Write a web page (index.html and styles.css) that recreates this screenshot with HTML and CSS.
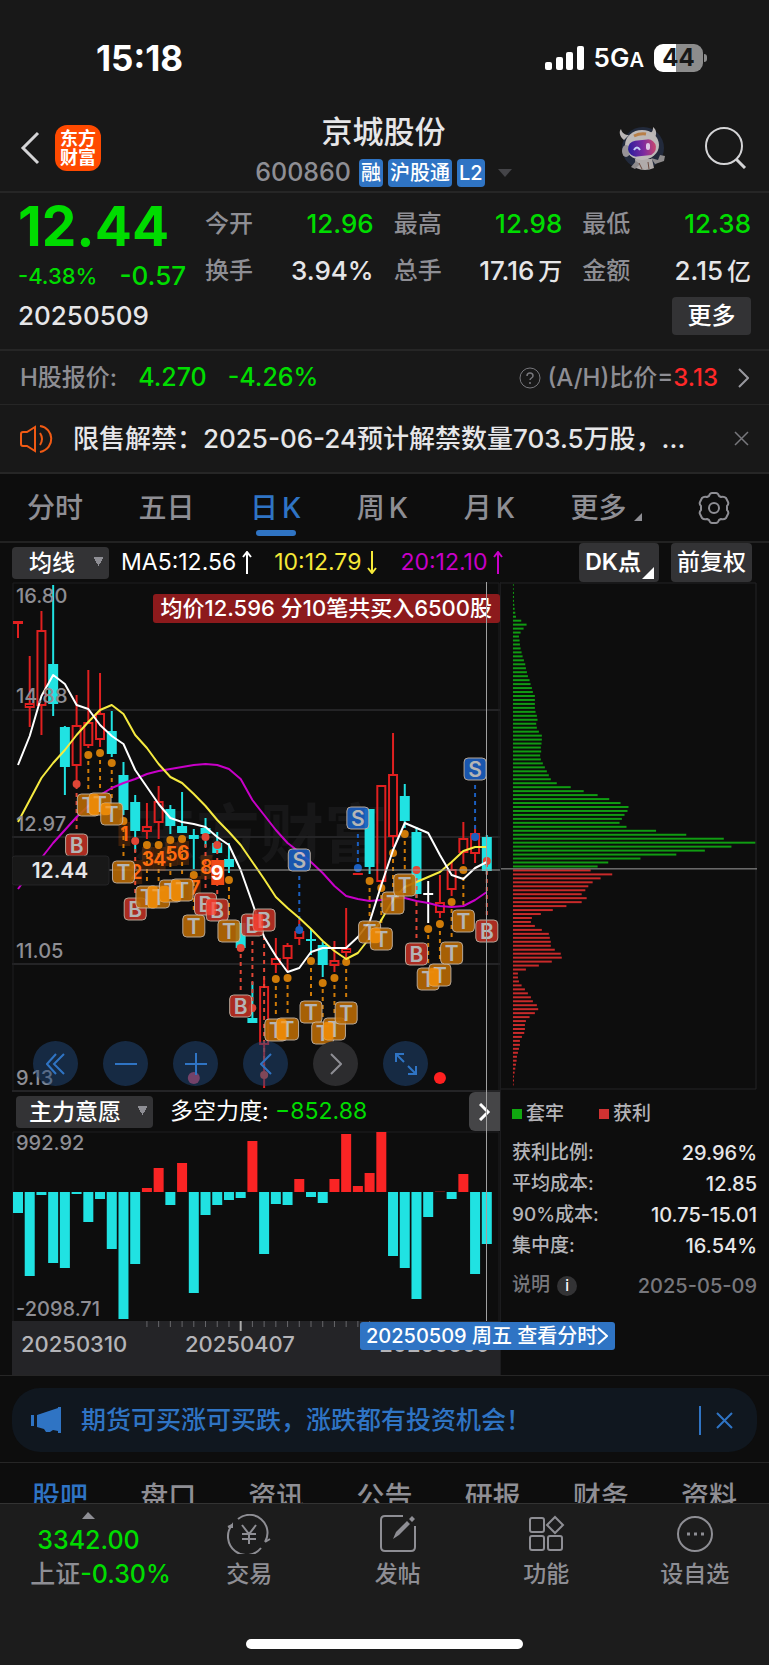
FILE: index.html
```html
<!DOCTYPE html>
<html lang="zh-CN">
<head>
    <meta charset="UTF-8">
    <meta name="viewport" content="width=device-width, initial-scale=1.0">
    <title>京城股份 600860</title>
    <link rel="stylesheet" href="styles.css">
</head>
<body>
    <!-- Status bar -->
    <div class="status-bar">
        <span class="clock">15:18</span>
        <div class="status-right">
            <svg width="39" height="25" viewBox="0 0 39 25" fill="#fff" aria-hidden="true">
                <rect x="0" y="16" width="7" height="8" rx="2"/>
                <rect x="11" y="11" width="7" height="13" rx="2"/>
                <rect x="21" y="6" width="7" height="18" rx="2"/>
                <rect x="32" y="0" width="7" height="24" rx="2"/>
            </svg>
            <span class="network">5G<small>A</small></span>
            <span class="battery">44</span>
        </div>
    </div>

    <header class="header">
        <div class="header-side">
            <button type="button" class="icon-btn" aria-label="返回">
                <svg width="20" height="34" viewBox="0 0 20 34" fill="none" stroke="#d4d4d6" stroke-width="3"><path d="M18 2L3 17l15 15"/></svg>
            </button>
            <a href="#" class="logo">东方<br>财富</a>
        </div>
        <div class="stock-title">
            <h1>京城股份</h1>
            <div class="stock-code">
                <span class="code">600860</span>
                <span class="tag">融</span>
                <span class="tag">沪股通</span>
                <span class="tag">L2</span>
                <svg class="caret" width="14" height="8" viewBox="0 0 14 8" fill="#444448"><path d="M0 0h14L7 8z"/></svg>
            </div>
        </div>
        <div class="header-side header-right">
            <button type="button" class="icon-btn" aria-label="智能助手">
                <svg width="46" height="46" viewBox="0 0 46 46">
                    <defs>
                        <linearGradient id="visor" x1="0" y1="0" x2="1" y2="0">
                            <stop offset="0" stop-color="#2a1f9c"/>
                            <stop offset=".55" stop-color="#7c2ba0"/>
                            <stop offset="1" stop-color="#c8486e"/>
                        </linearGradient>
                    </defs>
                    <circle cx="24" cy="23" r="21" fill="#222a3c"/>
                    <path d="M5 15C0 11 0 6 2 4c1 4 4 6 8 6zM31 8c3-1 3-4 3-6 4 3 4 8 1 12z" fill="#b9b5b5"/>
                    <path d="M16 34h17l2 9q-9 4-18 0z" fill="#b0abaa"/>
                    <path d="M17 36l-5 6 4 2 5-5zM32 33l7 2 2-5 5 1-1 5-9 3z" fill="#8e8b8c"/>
                    <path d="M20 38l3 6M29 37l1 7" stroke="#6b4b40"/>
                    <ellipse cx="23" cy="20" rx="17" ry="15" fill="#bdb9b9"/>
                    <ellipse cx="7" cy="26" rx="4" ry="6" fill="#979397"/>
                    <path d="M15 11q6-3 12-2" stroke="#b87f48" stroke-width="3" fill="none"/>
                    <rect x="9" y="15" width="28" height="16" rx="8" fill="url(#visor)" transform="rotate(-6 23 23)"/>
                    <path d="M15 25q3-5 6 0" stroke="#c2d0f4" stroke-width="2" fill="none"/>
                    <rect x="27" y="18" width="4" height="7" rx="2" fill="#dcc8e6"/>
                </svg>
            </button>
            <button type="button" class="icon-btn" aria-label="搜索">
                <svg width="42" height="42" viewBox="0 0 42 42" fill="none" stroke="#d4d4d6" stroke-width="2"><circle cx="19" cy="19" r="18"/><path d="M31 32l9 9" stroke-width="3"/></svg>
            </button>
        </div>
    </header>

    <!-- Quote -->
    <section class="quote">
        <div class="quote-price">
            <strong class="price">12.44</strong>
            <div class="change"><span>-4.38%</span><span class="change-amount">-0.57</span></div>
        </div>
        <dl class="quote-grid">
            <div><dt>今开</dt><dd class="down">12.96</dd></div>
            <div><dt>最高</dt><dd class="down">12.98</dd></div>
            <div><dt>最低</dt><dd class="down">12.38</dd></div>
            <div><dt>换手</dt><dd>3.94%</dd></div>
            <div><dt>总手</dt><dd>17.16<small>万</small></dd></div>
            <div><dt>金额</dt><dd>2.15<small>亿</small></dd></div>
        </dl>
        <div class="quote-foot">
            <span class="quote-date">20250509</span>
            <button type="button" class="more-btn">更多</button>
        </div>
    </section>

    <a href="#" class="h-share">
        <span>H股报价:</span>
        <span class="h-price">4.270</span>
        <span class="h-change">-4.26%</span>
        <svg class="help" width="22" height="22" viewBox="0 0 22 22" fill="none" stroke="#77777c"><circle cx="11" cy="11" r="10"/><path d="M8 9c0-4 6-4 6 0 0 2-3 2-3 4m0 2v2" stroke-width="1.5"/></svg>
        <span>(A/H)比价=<b>3.13</b></span>
        <svg class="chevron" width="11" height="20" viewBox="0 0 11 20" fill="none" stroke="#98989e" stroke-width="2"><path d="M1 1l9 9-9 9"/></svg>
    </a>

    <div class="notice">
        <svg width="33" height="28" viewBox="0 0 33 28" fill="none" stroke="#f05a14" stroke-width="2"><path d="M15 2L7 7H3q-2 0-2 2v10q0 2 2 2h4l8 5zM20 8q4 6 0 12M20 1c14 2 16 22 0 26"/></svg>
        <p>限售解禁：2025-06-24预计解禁数量703.5万股，...</p>
        <button type="button" class="icon-btn" aria-label="关闭">
            <svg width="15" height="15" viewBox="0 0 15 15" stroke="#77777c" stroke-width="1.5"><path d="M1 1l13 13M14 1L1 14"/></svg>
        </button>
    </div>

    <!-- Period tabs -->
    <nav class="period-tabs">
        <button type="button">分时</button>
        <button type="button">五日</button>
        <button type="button" class="active">日<span>K</span></button>
        <button type="button">周<span>K</span></button>
        <button type="button">月<span>K</span></button>
        <button type="button" class="has-more">更多</button>
        <button type="button" aria-label="设置">
            <svg width="32" height="32" viewBox="0 0 32 32" fill="none" stroke="#8e8e94" stroke-width="2" stroke-linejoin="round"><circle cx="16" cy="16" r="5"/><path d="M11 4q1-3 3-3h4q2 0 3 3l2 1q3-1 5 1l2 4q1 2-1 4v4q2 2 1 4l-2 4q-2 2-5 1l-2 1q-1 3-3 3h-4q-2 0-3-3l-2-1q-3 1-5-1l-2-4q-1-2 1-4v-4q-2-2-1-4l2-4q2-2 5-1z"/></svg>
        </button>
    </nav>

    <div class="ma-bar">
        <select class="select select-ma" aria-label="主图指标"><option>均线</option></select>
        <span class="ma5">MA5:12.56<svg class="arrow" width="10" height="23" viewBox="0 0 10 23" fill="none" stroke="currentColor" stroke-width="2"><path d="M5 23V1M1 6l4-5 4 5"/></svg></span>
        <span class="ma10">10:12.79<svg class="arrow" width="10" height="23" viewBox="0 0 10 23" fill="none" stroke="currentColor" stroke-width="2"><path d="M5 0v22M1 17l4 5 4-5"/></svg></span>
        <span class="ma20">20:12.10<svg class="arrow" width="10" height="23" viewBox="0 0 10 23" fill="none" stroke="currentColor" stroke-width="2"><path d="M5 23V1M1 6l4-5 4 5"/></svg></span>
        <button type="button" class="bar-btn dk">DK点</button>
        <button type="button" class="bar-btn">前复权</button>
    </div>

    <!-- Charts -->
    <main class="charts">
        <div class="chart-left">
            <div class="k-chart">
                <svg id="kline" viewBox="0 0 488 510" role="img" aria-label="日K线"></svg>
                <div class="avg-tip">均价12.596 分10笔共买入6500股</div>
                <div class="chart-tools">
                    <button type="button" aria-label="最早"><svg width="20" height="22" viewBox="0 0 20 22"><path d="M10 1L1 11l9 10M18 1L8 11l10 10"/></svg></button>
                    <button type="button" aria-label="缩小"><svg width="22" height="22" viewBox="0 0 22 22"><path d="M0 11h22"/></svg></button>
                    <button type="button" aria-label="放大"><svg width="22" height="22" viewBox="0 0 22 22"><path d="M0 11h22M11 0v22"/></svg></button>
                    <button type="button" aria-label="前一日"><svg width="12" height="22" viewBox="0 0 12 22"><path d="M11 1L1 11l10 10"/></svg></button>
                    <button type="button" class="off" aria-label="后一日"><svg width="12" height="22" viewBox="0 0 12 22"><path d="M1 1l10 10L1 21"/></svg></button>
                    <button type="button" aria-label="全屏"><svg width="22" height="22" viewBox="0 0 22 22"><path d="M1 9V1h8M1 1l8 8M21 13v8h-8M21 21l-8-8"/></svg></button>
                </div>
            </div>

            <div class="sub-bar">
                <select class="select select-sub" aria-label="副图指标"><option>主力意愿</option></select>
                <span>多空力度: <span class="down">−852.88</span></span>
                <button type="button" class="next-btn" aria-label="更多指标"><svg width="12" height="18" viewBox="0 0 12 18" fill="none" stroke="#fff" stroke-width="3"><path d="M1 1l8 8-8 8"/></svg></button>
            </div>

            <svg id="power" viewBox="0 0 488 190" role="img" aria-label="多空力度"></svg>

            <svg id="axis" class="axis" viewBox="0 0 488 54" role="img" aria-label="日期"></svg>
            <button type="button" class="date-tip">20250509 周五 查看分时<svg width="11" height="18" viewBox="0 0 11 18" fill="none" stroke="#fff" stroke-width="2"><path d="M1 1l9 8-9 8"/></svg></button>
            <div class="crosshair"></div>
        </div>

        <div class="chart-right">
            <svg id="chips" viewBox="0 0 257 510" role="img" aria-label="筹码分布"></svg>
            <div class="legend"><span class="trapped">套牢</span><span class="profit">获利</span></div>
            <dl class="chip-info">
                <div><dt>获利比例:</dt><dd>29.96%</dd></div>
                <div><dt>平均成本:</dt><dd>12.85</dd></div>
                <div><dt>90%成本:</dt><dd>10.75-15.01</dd></div>
                <div><dt>集中度:</dt><dd>16.54%</dd></div>
            </dl>
            <div class="chip-note"><a href="#">说明 <i>i</i></a><span>2025-05-09</span></div>
        </div>
    </main>

    <div class="promo-wrap">
        <div class="promo">
            <svg width="31" height="26" viewBox="0 0 31 26" fill="#2f74c4"><path d="M0 8h3v11H0zM6 8L27 1V0h3v26h-3v-2l-5-1-3 2-4 0-2-3-7-2z"/></svg>
            <a href="#">期货可买涨可买跌，涨跌都有投资机会！</a>
            <button type="button" class="icon-btn" aria-label="关闭">
                <svg width="17" height="17" viewBox="0 0 17 17" stroke="#2f74c4" stroke-width="2"><path d="M1 1l15 15M16 1L1 16"/></svg>
            </button>
        </div>
    </div>

    <nav class="info-tabs">
        <a href="#" class="active">股吧</a>
        <a href="#">盘口</a>
        <a href="#">资讯</a>
        <a href="#">公告</a>
        <a href="#">研报</a>
        <a href="#">财务</a>
        <a href="#">资料</a>
    </nav>

    <!-- Bottom bar -->
    <footer class="bottom-bar">
        <div class="bottom-items">
            <a href="#" class="index">
                <svg width="13" height="7" viewBox="0 0 13 7" fill="#8e8e94"><path d="M0 7h13L6 0z"/></svg>
                <span class="index-value down">3342.00</span>
                <span>上证<span class="down">-0.30%</span></span>
            </a>
            <a href="#">
                <svg width="44" height="40" viewBox="0 0 44 40"><path d="M11 5A18 18 0 0 1 38 28l1-2m-1 2l5-3M34 34A18 18 0 0 1 5 11v3m0-3L1 13M15 11l7 9 7-9M22 20v10M15 20h14M15 25h14"/></svg>
                交易
            </a>
            <a href="#">
                <svg width="44" height="40" viewBox="0 0 44 40"><path d="M27 2H9Q5 2 5 6v27q0 4 4 4h26q4 0 4-4V12"/><path d="M17 25l3-7L31 7l3 3-11 11zM33 5l3-3 3 3-3 3z" fill="#8e8e94" stroke="none"/></svg>
                发帖
            </a>
            <a href="#">
                <svg width="44" height="40" viewBox="0 0 44 40"><rect x="6" y="4" width="14" height="14" rx="2"/><path d="M31 3l8 8-8 8-8-8z"/><rect x="6" y="22" width="14" height="14" rx="2"/><rect x="24" y="22" width="14" height="14" rx="2"/></svg>
                功能
            </a>
            <a href="#">
                <svg width="44" height="40" viewBox="0 0 44 40"><circle cx="22" cy="20" r="17"/><path d="M14 20h3m4 0h3m4 0h3" stroke-width="3"/></svg>
                设自选
            </a>
        </div>
        <div class="home-indicator"></div>
    </footer>

    <script src="charts.js"></script>
</body>
</html>
```

FILE: styles.css
```css
* {
    box-sizing: border-box;
}

body {
    margin: 0;
    background-color: #0d0d0d;
    color: #e6e6e8;
    font-family: Inter, "Noto Sans CJK SC", sans-serif;
    font-size: 24px;
    font-weight: 500;
    line-height: 1;
}

a {
    color: inherit;
    text-decoration: none;
}

button {
    font: inherit;
    color: inherit;
    border: none;
    background: none;
    padding: 0;
    cursor: pointer;
}

dl, dd, p, h1 {
    margin: 0;
}

svg {
    display: block;
    flex-shrink: 0;
}

.down {
    color: #00dc00;
}

/* Status bar */
.status-bar {
    display: flex;
    justify-content: space-between;
    align-items: center;
    height: 104px;
    padding: 12px 66px 0 96px;
    background-color: #181818;
    color: #fff;
}

.clock {
    font-size: 35px;
    font-weight: 700;
}

.status-right {
    display: flex;
    align-items: center;
    gap: 10px;
}

.network {
    font-size: 26px;
    font-weight: 600;
}

.network small {
    font-size: 20px;
}

.battery {
    position: relative;
    width: 49px;
    height: 28px;
    border-radius: 9px;
    background: linear-gradient(to right, #fff 44%, #8c8c8c 44%);
    color: #181818;
    font-size: 24px;
    font-weight: 700;
    line-height: 28px;
    text-align: center;
}

.battery::after {
    content: "";
    position: absolute;
    right: -4px;
    top: 10px;
    width: 3px;
    height: 8px;
    border-radius: 0 3px 3px 0;
    background-color: #8c8c8c;
}

/* Header */
.header {
    display: grid;
    grid-template-columns: 1fr auto 1fr;
    align-items: center;
    height: 89px;
    padding: 0 22px 0 20px;
    background-color: #181818;
    border-bottom: 2px solid #262626;
}

.header-side {
    display: flex;
    align-items: center;
    gap: 15px;
}

.header-right {
    justify-content: flex-end;
    gap: 40px;
}

.logo {
    width: 46px;
    height: 46px;
    padding-top: 4px;
    border-radius: 12px;
    background-color: #ff4a00;
    color: #fff;
    font-size: 18px;
    font-weight: 700;
    line-height: 19px;
    text-align: center;
}

.stock-title {
    display: flex;
    flex-direction: column;
    align-items: center;
    gap: 9px;
    padding-top: 5px;
}

.stock-title h1 {
    font-size: 31px;
    font-weight: 500;
    line-height: 36px;
}

.stock-code {
    display: flex;
    align-items: center;
    gap: 5px;
}

.code {
    margin-right: 3px;
    color: #8e8e94;
    font-size: 25px;
}

.tag {
    padding: 0 2px;
    border-radius: 4px;
    background-color: #2f74c4;
    color: #fff;
    font-size: 20px;
    line-height: 28px;
}

.caret {
    margin-left: 8px;
}

/* Quote */
.quote {
    display: grid;
    grid-template-columns: 187px 1fr;
    padding: 7px 18px 14px;
    background-color: #181818;
    border-bottom: 2px solid #262626;
}

.quote-price {
    color: #00dc00;
}

.price {
    display: block;
    font-size: 55px;
    font-weight: 700;
    line-height: 52px;
}

.change {
    display: flex;
    align-items: center;
    gap: 22px;
    margin-top: 10px;
    font-size: 22px;
    line-height: 28px;
}

.change-amount {
    font-size: 26px;
}

.quote-grid {
    display: grid;
    grid-template-columns: repeat(3, 1fr);
    column-gap: 20px;
}

.quote-grid div,
.chip-info div {
    display: flex;
    justify-content: space-between;
    align-items: center;
}

.quote-grid div {
    height: 47px;
}

.quote-grid dt {
    color: #8e8e94;
}

.quote-grid dd {
    font-size: 26px;
}

.quote-grid small {
    margin-left: 4px;
    font-size: 24px;
}

.quote-foot {
    grid-column: 1 / -1;
    display: flex;
    justify-content: space-between;
    align-items: center;
    margin-top: 3px;
}

.quote-date {
    font-size: 26px;
}

.more-btn {
    width: 79px;
    height: 38px;
    border-radius: 4px;
    background-color: #333335;
    color: #fff;
}

.h-share {
    display: flex;
    align-items: center;
    height: 54px;
    padding: 0 20px;
    background-color: #181818;
    border-bottom: 1px solid #262626;
    color: #8e8e94;
    font-size: 24px;
}

.h-price {
    margin: 0 21px;
    color: #00dc00;
    font-size: 25px;
}

.h-change {
    color: #00dc00;
    font-size: 25px;
}

.help {
    margin: 0 6px 0 auto;
}

.h-share b {
    color: #ff2828;
    font-weight: 500;
}

.chevron {
    margin-left: 20px;
}

.notice {
    display: flex;
    align-items: center;
    height: 69px;
    padding: 0 20px;
    background-color: #181818;
    border-bottom: 2px solid #262626;
}

.notice p {
    flex: 1;
    margin: 0 20px;
    overflow: hidden;
    white-space: nowrap;
    text-overflow: ellipsis;
    font-size: 26px;
    line-height: 36px;
}

/* Period tabs */
.period-tabs {
    display: flex;
    justify-content: space-between;
    align-items: center;
    height: 69px;
    padding: 0 39px 0 27px;
    border-bottom: 2px solid #222;
    color: #8e8e94;
    font-size: 28px;
}

.period-tabs button {
    position: relative;
    height: 67px;
}

.period-tabs span {
    margin-left: 4px;
}

.period-tabs .active {
    color: #2f74c4;
}

.period-tabs .active::after {
    content: "";
    position: absolute;
    left: 50%;
    bottom: 5px;
    width: 40px;
    height: 6px;
    margin-left: -20px;
    border-radius: 3px;
    background-color: #2f74c4;
}

.period-tabs .has-more {
    padding-right: 16px;
}

.has-more::after,
.dk::after {
    content: "";
    position: absolute;
    right: 0;
    bottom: 20px;
    border-left: 8px solid transparent;
    border-bottom: 8px solid #8e8e94;
}

.ma-bar {
    display: flex;
    align-items: center;
    height: 39px;
    padding: 0 17px 0 12px;
    font-size: 23px;
    font-weight: 400;
    white-space: nowrap;
}

.select {
    appearance: none;
    height: 32px;
    border: none;
    border-radius: 4px;
    background-color: #333335;
    background-image: conic-gradient(from -30deg at 50% 100%, #8e8e94 60deg, transparent 0);
    background-repeat: no-repeat;
    background-size: 9px 9px;
    background-position: right 6px top 10px;
    color: #fff;
    font: inherit;
    font-weight: 500;
    line-height: 32px;
}

.select-ma {
    width: 97px;
    padding: 0 17px;
}

.ma-bar span {
    display: flex;
    align-items: center;
    gap: 6px;
}

.ma5 {
    margin: 0 22px 0 12px;
    color: #fff;
}

.ma10 {
    margin-right: 23px;
    color: #f5e838;
}

.ma20 {
    color: #c800c8;
}

.bar-btn {
    position: relative;
    height: 39px;
    padding: 0 6px;
    margin-left: 12px;
    border-radius: 4px;
    background-color: #333335;
    color: #fff;
    font-size: 23px;
    font-weight: 500;
}

.dk {
    margin-left: auto;
    padding-right: 18px;
    font-weight: 600;
}

.dk::after {
    right: 5px;
    bottom: 3px;
    border-left-width: 12px;
    border-bottom: 12px solid #fff;
}

/* Charts */
.charts {
    display: grid;
    grid-template-columns: 488fr 257fr;
    margin: 0 12px;
}

.charts svg text {
    font-family: Inter, "Noto Sans CJK SC", sans-serif;
}

.chart-left {
    position: relative;
}

#kline,
#power,
#chips,
#axis {
    width: 100%;
    height: auto;
}

.k-chart {
    position: relative;
}

.avg-tip {
    position: absolute;
    top: 12px;
    right: 0;
    padding: 0 8px;
    border-radius: 3px;
    background-color: #8c1a1c;
    color: #fff;
    font-size: 22px;
    line-height: 29px;
    white-space: nowrap;
}

.chart-tools {
    position: absolute;
    left: 21px;
    bottom: 6px;
    display: flex;
    gap: 25px;
}

.chart-tools button {
    display: flex;
    justify-content: center;
    align-items: center;
    width: 45px;
    height: 45px;
    border-radius: 50%;
    background-color: rgba(32, 72, 122, 0.5);
}

.chart-tools .off {
    background-color: #2c2c2e;
}

.chart-tools svg {
    fill: none;
    stroke: #2f74c4;
    stroke-width: 2;
}

.chart-tools .off svg {
    stroke: #8e8e94;
}

.sub-bar {
    display: flex;
    align-items: center;
    height: 39px;
    padding-left: 4px;
    color: #fff;
    font-size: 23px;
    font-weight: 400;
    white-space: nowrap;
}

.select-sub {
    width: 137px;
    margin-right: 17px;
    padding: 0 13px;
}

.next-btn {
    display: flex;
    justify-content: center;
    align-items: center;
    width: 31px;
    height: 39px;
    margin-left: auto;
    border-radius: 6px 0 0 6px;
    background-color: #454547;
}

.axis {
    background-color: #242427;
}

.date-tip {
    position: absolute;
    left: 348px;
    bottom: 25px;
    display: flex;
    align-items: center;
    height: 28px;
    padding: 0 7px 0 6px;
    border-radius: 3px;
    background-color: #2f74c4;
    color: #fff;
    font-size: 20px;
    white-space: nowrap;
    z-index: 2;
}

.crosshair {
    position: absolute;
    top: 0;
    right: 13px;
    bottom: 54px;
    width: 1px;
    background-color: #a0a0a0;
}

.chart-right {
    border-left: 1px solid #1c1c1e;
    color: #b4b4b8;
    font-size: 19px;
}

.legend {
    display: flex;
    gap: 35px;
    padding: 14px 0 0 11px;
    line-height: 20px;
}

.legend span {
    display: flex;
    align-items: center;
    gap: 4px;
}

.legend span::before {
    content: "";
    width: 10px;
    height: 10px;
    background-color: #10a810;
}

.legend .profit::before {
    background-color: #d03232;
}

.chip-info {
    padding: 13px 0 0 11px;
}

.chip-info div {
    height: 31px;
}

.chip-info dd {
    color: #e6e6e8;
    font-size: 20px;
}

.chip-note {
    display: flex;
    justify-content: space-between;
    align-items: center;
    padding: 14px 0 0 11px;
    color: #77777c;
}

.chip-note span {
    font-size: 20px;
}

.chip-note i {
    display: inline-block;
    width: 20px;
    margin-left: 2px;
    border-radius: 50%;
    background-color: #333335;
    color: #fff;
    font-size: 15px;
    font-style: normal;
    line-height: 20px;
    text-align: center;
}

/* Promo banner */
.promo-wrap {
    padding: 12px 12px 10px;
    border-top: 1px solid #262626;
    border-bottom: 1px solid #262626;
}

.promo {
    display: flex;
    align-items: center;
    height: 64px;
    padding: 0 24px 0 19px;
    border-radius: 28px;
    background-color: #10171f;
    color: #2f74c4;
    font-size: 25px;
}

.promo a {
    flex: 1;
    margin-left: 19px;
}

.promo .icon-btn {
    padding: 6px 0 6px 15px;
    border-left: 2px solid #2f74c4;
}

.info-tabs {
    display: flex;
    justify-content: space-between;
    height: 40px;
    padding: 20px 32px 0;
    overflow: hidden;
    color: #8e8e94;
    font-size: 28px;
}

.info-tabs .active {
    color: #2f74c4;
}

/* Bottom bar */
.bottom-bar {
    height: 162px;
    background-color: #1c1c1c;
    border-top: 1px solid #333;
    color: #8e8e94;
    overflow: hidden;
}

.bottom-items {
    display: grid;
    grid-template-columns: 175px repeat(4, 1fr);
    height: 135px;
}

.bottom-items a {
    display: flex;
    flex-direction: column;
    align-items: center;
    gap: 9px;
    padding-top: 10px;
    font-size: 23px;
}

.bottom-items a > svg {
    fill: none;
    stroke: #8e8e94;
    stroke-width: 2;
}

.bottom-items .index {
    gap: 9px;
    padding: 8px 0 0 26px;
    font-size: 25px;
}

.bottom-items .index > svg {
    margin-right: 24px;
    fill: #8e8e94;
    stroke: none;
}

.index-value {
    margin-right: 24px;
}

.home-indicator {
    width: 36%;
    height: 10px;
    margin: 0 auto;
    border-radius: 5px;
    background-color: #fff;
}
```

FILE: charts.js
```js
const RED = '#e02020';
const CYAN = '#20e2e2';
const STEP = 11.72;
const cx = i => 6 + i * STEP;

// [colour, high, body top, body bottom, low]
const candles = [
    ['f', 39, 39, 42, 56], ['r', 74, 121, 126, 145], ['r', 29, 48, 124, 153], ['c', 3, 82, 122, 134],
    ['c', 144, 145, 185, 213], ['r', 113, 143, 184, 201], ['r', 88, 140, 164, 166], ['r', 91, 131, 158, 165],
    ['c', 129, 149, 172, 175], ['c', 180, 193, 228, 233], ['c', 213, 220, 249, 270], ['r', 221, 244, 250, 257],
    ['r', 204, 219, 241, 257], ['c', 223, 227, 244, 252], ['c', 210, 244, 251, 251], ['c', 247, 253, 257, 287],
    ['c', 236, 246, 252, 265], ['c', 250, 261, 271, 271], ['c', 261, 277, 285, 291], ['c', 341, 341, 366, 366],
    ['c', 400, 436, 441, 441], ['r', 396, 404, 463, 506], ['r', 356, 376, 383, 391], ['r', 361, 363, 377, 390],
    ['r', 338, 349, 357, 363], ['c', 347, 357, 359, 373], ['c', 360, 363, 383, 395], ['r', 359, 378, 384, 390],
    ['r', 326, 366, 371, 377], ['f', 291, 291, 293, 293], ['c', 227, 227, 285, 292], ['r', 203, 203, 300, 303],
    ['r', 151, 192, 255, 265], ['c', 202, 214, 239, 246], ['c', 245, 250, 312, 316], ['w', 299, 311, 313, 341],
    ['r', 293, 320, 331, 336], ['r', 280, 287, 308, 314], ['r', 240, 256, 271, 282], ['r', 244, 251, 272, 281],
    ['c', 253, 255, 289, 292]
];

const ma5 = [183, 154, 114, 93, 102, 123, 127, 143, 154, 162, 188, 205, 222, 236, 240, 242, 245, 255, 263, 288, 321, 355, 374, 390, 386, 370, 366, 366, 366, 355, 340, 303, 268, 241, 246, 251, 273, 293, 297, 286, 280];
const ma10 = [240, 218, 196, 181, 168, 153, 140, 128, 123, 132, 153, 166, 182, 195, 201, 212, 224, 238, 250, 263, 280, 297, 315, 326, 336, 347, 359, 369, 377, 371, 356, 338, 318, 305, 300, 295, 290, 280, 269, 265, 265];
const ma20 = [307, 291, 276, 261, 248, 235, 224, 213, 206, 201, 197, 192, 189, 187, 185, 183, 182, 183, 187, 197, 218, 233, 248, 261, 270, 280, 291, 304, 314, 317, 319, 318, 316, 316, 319, 321, 324, 325, 324, 318, 310];

// [letter, index, badge y, dot y]
const marks = [
    ['B', 5, 263, 202], ['T', 6, 223, 173], ['T', 7, 222, 171], ['T', 8, 232, 181], ['T', 9, 290, 239],
    ['B', 10, 327, 259], ['T', 11, 315, 263], ['T', 12, 315, 263], ['T', 13, 309, 258], ['T', 14, 308, 257],
    ['T', 15, 344, 293], ['B', 16, 322, 255], ['B', 17, 328, 263], ['T', 18, 349, 298], ['B', 19, 424, 366],
    ['B', 20, 343, 426], ['B', 21, 338, 493], ['T', 22, 448, 397], ['T', 23, 447, 396], ['S', 24, 278, 348],
    ['T', 25, 430, 379], ['T', 26, 451, 401], ['T', 27, 447, 396], ['T', 28, 431, 380], ['S', 29, 236, 286],
    ['T', 30, 350, 299], ['T', 31, 357, 306], ['T', 32, 321, 271], ['T', 33, 303, 252], ['B', 34, 372, 288],
    ['T', 35, 397, 347], ['T', 36, 393, 342], ['T', 37, 371, 320], ['T', 38, 339, 288], ['S', 39, 187, 255],
    ['B', 40, 349, 279]
];
// badge fill, overlap fill, dot and stem
const markColors = {
    T: ['#b86a05', '#ff9608', '#cf7b08'],
    B: ['#bd3024', '#ff4030', '#e04636'],
    S: ['#1b5fc0', '#1b5fc0', '#1b5fc0']
};

// [digit, index, y]
const counts = [[1, 9, 252], [2, 10, 290], [3, 11, 277], [4, 12, 277], [5, 13, 272], [6, 14, 271], [7, 15, 306], [8, 16, 285]];

const line = (x1, y1, x2, y2, stroke, extra = '') =>
    `<line x1="${x1}" y1="${y1}" x2="${x2}" y2="${y2}" stroke="${stroke}" ${extra}/>`;
const rect = (x, y, w, h, fill, extra = '') =>
    `<rect x="${x}" y="${y}" width="${w}" height="${h}" fill="${fill}" ${extra}/>`;
const text = (x, y, s, size, fill, extra = '') =>
    `<text x="${x}" y="${y}" font-size="${size}" fill="${fill}" ${extra}>${s}</text>`;
const curve = (values, stroke) =>
    `<polyline points="${values.map((v, i) => `${cx(i)},${v}`).join(' ')}" fill="none" stroke="${stroke}" stroke-width="2" stroke-linejoin="round"/>`;

function drawKline() {
    let s = text(120, 275, '东方财富', 64, '#171718', 'font-weight="700"');
    [128, 255, 382].forEach(y => { s += line(0, y, 488, y, '#242426', 'stroke-width="2"'); });
    s += '<path d="M1 510V1H487V510" fill="none" stroke="#1f1f21"/>' + line(0, 509, 488, 509, '#242426', 'stroke-width="2"');

    candles.forEach(([type, high, top, bottom, low], i) => {
        const x = cx(i);
        const color = type === 'c' ? CYAN : type === 'w' ? '#fff' : RED;
        if (type === 'r') {
            s += line(x, high, x, top, color, 'stroke-width="2"') + line(x, bottom, x, low, color, 'stroke-width="2"');
            s += rect(x - 4, top + 1, 8, Math.max(bottom - top - 2, 2), 'none', `stroke="${color}" stroke-width="2"`);
        } else {
            s += line(x, high, x, low, color, 'stroke-width="2"') + rect(x - 5, top, 10, bottom - top, color);
        }
    });

    marks.forEach(([letter, i, y, dot]) => {
        const color = markColors[letter][2];
        const x = cx(i);
        const end = y > dot ? y - 16 : y + 16;
        s += line(x, end, x, dot, color, 'stroke-width="2" stroke-dasharray="4 4"');
        s += `<circle cx="${x}" cy="${dot}" r="4" fill="${color}"/>`;
    });
    s += curve(ma20, '#c800c8') + curve(ma10, '#f5ea40') + curve(ma5, '#fff');
    s += line(0, 288, 488, 288, '#a0a0a0');

    counts.forEach(([n, i, y]) => {
        s += rect(cx(i) - 5, y - 12, 12, 24, '#ff6a0030');
        s += text(cx(i) + 1, y + 7, n, 20, '#ff6a10', 'text-anchor="middle" font-weight="600"');
    });
    s += rect(cx(17) - 6, 278, 13, 25, '#f04a18') + text(cx(17), 298, 9, 20, '#fff', 'text-anchor="middle" font-weight="700"');

    marks.forEach(([letter, i, y]) => {
        s += '<g opacity=".9">' + rect(cx(i) - 11, y - 11, 22, 22, markColors[letter][0], 'rx="4" stroke="#c8b8a8"');
        s += text(cx(i), y + 8, letter, 21, '#c8c8c8', 'text-anchor="middle" font-weight="600"') + '</g>';
    });
    // brighter strip where two neighbouring badges overlap
    marks.forEach(([letter, i, y], k) => {
        const next = marks[k + 1];
        if (next && next[0] === letter && next[1] === i + 1 && Math.abs(next[2] - y) < 16) {
            const top = Math.max(y, next[2]) - 11;
            const bottom = Math.min(y, next[2]) + 11;
            s += rect(cx(i + 1) - 11, top, 10, bottom - top, markColors[letter][1], 'rx="3" opacity=".7"');
        }
    });

    s += `<circle cx="${cx(15)}" cy="496" r="6" fill="#c83c58"/><circle cx="${cx(36)}" cy="496" r="6" fill="#ff2020"/>`;
    [['16.80', 21], ['14.88', 121], ['12.97', 249], ['11.05', 376], ['9.13', 503]].forEach(([p, y]) => {
        s += text(4, y, p, 20, '#8e8e94');
    });
    s += rect(0, 274, 97, 29, '#181818', 'rx="3" stroke="#242426"') + text(48, 296, '12.44', 21, '#e6e6e8', 'text-anchor="middle" font-weight="600"');
    document.getElementById('kline').innerHTML = s;
}

// bar heights, positive grows down
const power = [21, 84, 3, 71, 76, 2, 30, 7, 57, 127, 72, -4, -24, 13, -29, 101, 23, 13, 8, 6, -51, 62, 12, 13, -13, 5, 11, -13, -58, -6, -19, -60, 64, 76, 107, 25, 0, 7, -18, 82, 52];

function drawPower() {
    let s = '<path d="M1 190V1H487V190" fill="none" stroke="#1f1f21"/>';
    power.forEach((v, i) => {
        s += v < 0 ? rect(cx(i) - 5, 61 + v, 10, -v, '#fa2424') : rect(cx(i) - 5, 61, 10, v, CYAN);
    });
    s += rect(cx(36) - 5, 60, 10, 1, '#5a1414');
    s += text(4, 19, '992.92', 20, '#8e8e94') + text(4, 185, '-2098.71', 20, '#8e8e94');
    document.getElementById('power').innerHTML = s;
}

function drawAxis() {
    let s = '';
    for (let i = 11; i <= 30; i++) {
        s += line(cx(i), 0, cx(i), i === 19 ? 10 : 6, i === 19 ? '#aaa' : '#66666a', i === 19 ? 'stroke-width="2"' : '');
    }
    s += text(9, 31, '20250310', 22, '#b4b4b8') + text(173, 31, '20250407', 22, '#b4b4b8');
    s += text(478, 31, '20250509', 22, '#b4b4b8', 'text-anchor="end"');
    document.getElementById('axis').innerHTML = s;
}

const trapped = [2, 2, 3, 3, 3, 4, 5, 7, 9, 25, 41, 32, 23, 18, 20, 21, 23, 26, 29, 33, 37, 39, 42, 45, 50, 53, 57, 60, 66, 66, 66, 66, 68, 72, 74, 70, 72, 78, 87, 87, 86, 84, 85, 82, 84, 90, 96, 102, 108, 114, 132, 174, 213, 255, 290, 324, 348, 345, 336, 328, 321, 342, 431, 522, 635, 730, 658, 578, 492, 384, 287, 255];
const profit = [234, 299, 264, 240, 227, 218, 207, 222, 207, 161, 120, 84, 57, 54, 66, 87, 108, 111, 114, 114, 126, 144, 147, 117, 78, 39, 15, 15, 18, 26, 36, 45, 54, 60, 72, 76, 66, 50, 39, 36, 36, 34, 27, 21, 21, 18, 15, 12, 11, 9, 7, 5, 3, 3, 2];

function drawChips() {
    let s = '<path d="M0 1H256V509H0" fill="none" stroke="#242426"/>';
    trapped.concat(profit).forEach((v, i) => {
        s += rect(12, 2 + i * 3.98, v / 3, 2, i < trapped.length ? '#109c12' : '#c82a2a');
    });
    s += line(0, 288, 257, 288, '#a0a0a0');
    document.getElementById('chips').innerHTML = s;
}

drawKline();
drawPower();
drawAxis();
drawChips();
```
